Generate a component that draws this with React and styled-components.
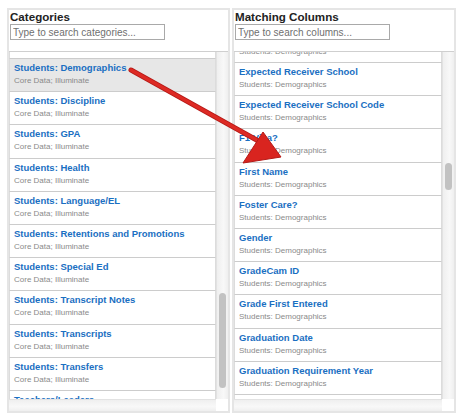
import React from 'react'
import styled, { createGlobalStyle } from 'styled-components';

const GlobalStyle = createGlobalStyle`
  html, body {
    margin: 0;
    padding: 0;
    background: #ffffff;
  }
  body {
    font-family: "Liberation Sans", Arial, Helvetica, sans-serif;
  }
`;

const categories = [
  { title: 'Students: Attendance', sub: 'Core Data; Illuminate' },
  { title: 'Students: Demographics', sub: 'Core Data; Illuminate', selected: true },
  { title: 'Students: Discipline', sub: 'Core Data; Illuminate' },
  { title: 'Students: GPA', sub: 'Core Data; Illuminate' },
  { title: 'Students: Health', sub: 'Core Data; Illuminate' },
  { title: 'Students: Language/EL', sub: 'Core Data; Illuminate' },
  { title: 'Students: Retentions and Promotions', sub: 'Core Data; Illuminate' },
  { title: 'Students: Special Ed', sub: 'Core Data; Illuminate' },
  { title: 'Students: Transcript Notes', sub: 'Core Data; Illuminate' },
  { title: 'Students: Transcripts', sub: 'Core Data; Illuminate' },
  { title: 'Students: Transfers', sub: 'Core Data; Illuminate' },
  { title: 'Teachers/Leaders', sub: 'Core Data; Illuminate' },
];

const columns = [
  'Ethnicity',
  'Expected Receiver School',
  'Expected Receiver School Code',
  'F1 Visa?',
  'First Name',
  'Foster Care?',
  'Gender',
  'GradeCam ID',
  'Grade First Entered',
  'Graduation Date',
  'Graduation Requirement Year',
  'Hispanic',
].map((title) => ({ title, sub: 'Students: Demographics' }));

export default function App() {
  return (
    <Page>
      <GlobalStyle />
      <Picker
        heading="Categories"
        placeholder="Type to search categories..."
        items={categories}
        offset={-26.2}
        thumbTop={241}
        thumbHeight={95}
      />
      <Picker
        heading="Matching Columns"
        placeholder="Type to search columns..."
        items={columns}
        offset={-22.2}
        thumbTop={111}
        thumbHeight={27}
      />
      <Arrow viewBox="0 0 459 416" width="459" height="416">
        <line x1="131" y1="70" x2="262" y2="143" stroke="#b51a17" strokeWidth="5" strokeLinecap="round" />
        <line x1="131" y1="70" x2="262" y2="143" stroke="#dd2a24" strokeWidth="3.4" strokeLinecap="round" />
        <polygon points="243,163 263,132 281,157" fill="#d9241f" stroke="#b51a17" strokeWidth="1" strokeLinejoin="round" />
      </Arrow>
    </Page>
  )
}

function Picker({ heading, placeholder, items, offset, thumbTop, thumbHeight }) {
  return (
    <Panel>
      <Header>
        <Heading>{heading}</Heading>
        <Search placeholder={placeholder} />
      </Header>
      <Body>
        <Viewport>
          <List style={{ marginTop: offset }}>
            {items.map((item) => (
              <Item key={item.title} $selected={item.selected}>
                <ItemTitle>{item.title}</ItemTitle>
                <ItemSub>{item.sub}</ItemSub>
              </Item>
            ))}
          </List>
        </Viewport>
        <VTrack>
          <Thumb style={{ marginTop: thumbTop, height: thumbHeight }} />
        </VTrack>
      </Body>
      <Footer>
        <HTrack />
        <Corner />
      </Footer>
    </Panel>
  )
}

const Page = styled.div`
  position: relative;
  width: 459px;
  height: 416px;
  box-sizing: border-box;
  padding: 8px 3px 3px 7px;
  display: flex;
  gap: 2px;
  overflow: hidden;
`;

const Panel = styled.div`
  width: 223px;
  height: 405px;
  box-sizing: border-box;
  border: 2px solid #e5e5e5;
  background: #ffffff;
  display: flex;
  flex-direction: column;
  &:last-of-type {
    width: 224px;
  }
`;

const Header = styled.div`
  height: 42px;
  box-sizing: border-box;
  padding: 0 1px;
  border-bottom: 1px solid #cfcfcf;
  background: #ffffff;
  position: relative;
  z-index: 2;
`;

const Heading = styled.div`
  font-size: 11.6px;
  line-height: 14px;
  font-weight: bold;
  color: #222222;
`;

const Search = styled.input`
  display: block;
  box-sizing: border-box;
  width: 155px;
  height: 16px;
  margin: 0;
  padding: 0 2px;
  border: 1px solid #a9a9a9;
  font-family: "Liberation Sans", Arial, sans-serif;
  font-size: 10px;
  color: #333333;
  outline: none;
  &::placeholder {
    color: #6f6f6f;
  }
`;

const Body = styled.div`
  flex: 1;
  display: flex;
  min-height: 0;
`;

const Viewport = styled.div`
  flex: 1;
  overflow: hidden;
`;

const List = styled.div`
  display: flex;
  flex-direction: column;
`;

const Item = styled.div`
  height: 33.2px;
  flex-shrink: 0;
  box-sizing: border-box;
  padding: 3px 4px 0;
  border: 1px solid #dcdcdc;
  border-top: none;
  border-bottom-color: #cccccc;
  background: ${(p) => (p.$selected ? '#e7e7e7' : '#ffffff')};
  white-space: nowrap;
  overflow: hidden;
`;

const ItemTitle = styled.div`
  font-size: 9.5px;
  line-height: 12px;
  font-weight: bold;
  color: #1a6fc2;
`;

const ItemSub = styled.div`
  margin-top: 1px;
  font-size: 8px;
  line-height: 11px;
  color: #8a8a8a;
`;

const VTrack = styled.div`
  width: 12px;
  flex-shrink: 0;
  box-sizing: border-box;
  border-left: 1px solid #e2e2e2;
  background: linear-gradient(to right, #efefef, #f8f8f8 60%, #efefef);
  display: flex;
  justify-content: center;
`;

const Thumb = styled.div`
  width: 7px;
  border-radius: 4px;
  background: #c2c2c2;
`;

const Footer = styled.div`
  height: 12px;
  display: flex;
`;

const HTrack = styled.div`
  flex: 1;
  box-sizing: border-box;
  border-top: 1px solid #e2e2e2;
  background: linear-gradient(to bottom, #efefef, #f8f8f8 60%, #efefef);
`;

const Corner = styled.div`
  width: 12px;
  background: #ffffff;
`;

const Arrow = styled.svg`
  position: absolute;
  left: 0;
  top: 0;
  pointer-events: none;
  z-index: 5;
`;
